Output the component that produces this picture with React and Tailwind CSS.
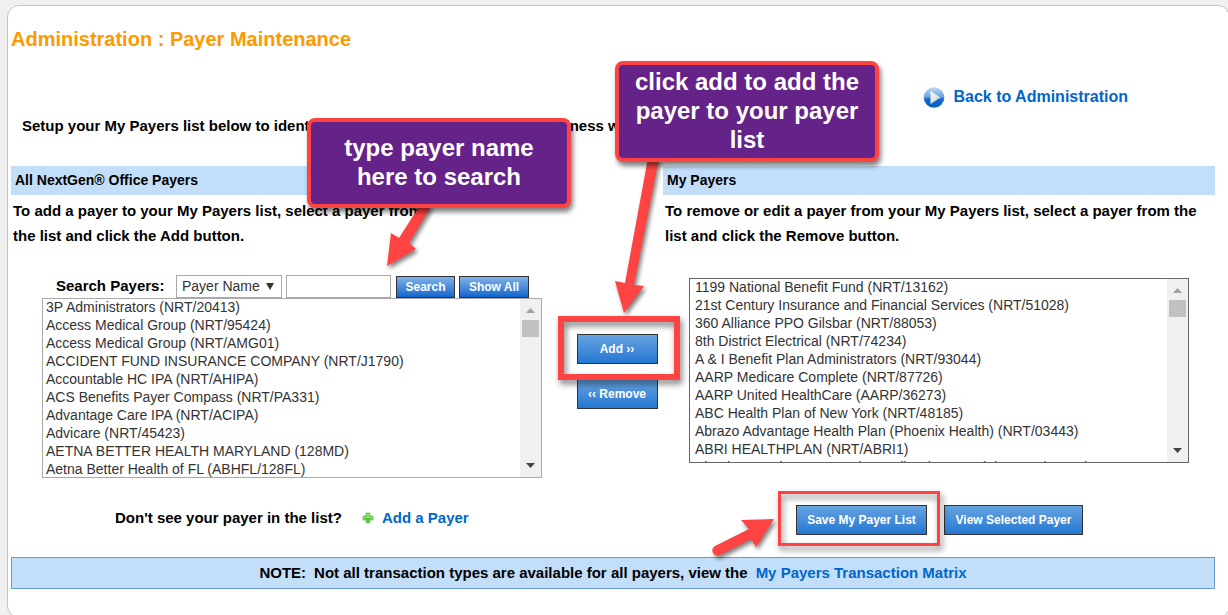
import React, { useState } from "react";
import clsx from "clsx";

const ALL_PAYERS = [
  "3P Administrators (NRT/20413)",
  "Access Medical Group (NRT/95424)",
  "Access Medical Group (NRT/AMG01)",
  "ACCIDENT FUND INSURANCE COMPANY (NRT/J1790)",
  "Accountable HC IPA (NRT/AHIPA)",
  "ACS Benefits Payer Compass (NRT/PA331)",
  "Advantage Care IPA (NRT/ACIPA)",
  "Advicare (NRT/45423)",
  "AETNA BETTER HEALTH MARYLAND (128MD)",
  "Aetna Better Health of FL (ABHFL/128FL)",
];

const MY_PAYERS = [
  "1199 National Benefit Fund (NRT/13162)",
  "21st Century Insurance and Financial Services (NRT/51028)",
  "360 Alliance PPO Gilsbar (NRT/88053)",
  "8th District Electrical (NRT/74234)",
  "A & I Benefit Plan Administrators (NRT/93044)",
  "AARP Medicare Complete (NRT/87726)",
  "AARP United HealthCare (AARP/36273)",
  "ABC Health Plan of New York (NRT/48185)",
  "Abrazo Advantage Health Plan (Phoenix Health) (NRT/03443)",
  "ABRI HEALTHPLAN (NRT/ABRI1)",
  "Absolute Total Care - South Carolina (Centene) (CTCTL/68069)",
];

const Button = ({ small, className, children }) => (
  <button
    type="button"
    className={clsx(
      "border border-[#333] text-xs font-bold text-white whitespace-nowrap",
      small
        ? "h-[22px] bg-linear-to-b from-[#7fb2e8] to-[#0a66cc]"
        : "h-[30px] bg-linear-to-b from-[#66a3e0] to-[#2277d2]",
      className
    )}
  >
    {children}
  </button>
);

const SectionTitle = ({ children }) => (
  <h2 className="flex h-[29px] items-center bg-[#c3def9] px-1 pb-0.5 text-sm font-bold">
    {children}
  </h2>
);

const ScrollBar = () => (
  <div
    aria-hidden="true"
    className="flex w-[21px] flex-col items-center justify-between bg-[#f0f0f0] py-[9px]"
  >
    <div className="flex flex-col items-center gap-[7px]">
      <svg width="9" height="5" viewBox="0 0 9 5" fill="#a0a0a0">
        <path d="M0 5 4.500 0 9 5z" />
      </svg>
      <div className="h-[17px] w-[17px] bg-[#c1c1c1]" />
    </div>
    <svg width="9" height="5" viewBox="0 0 9 5" fill="#444">
      <path d="M0 0h9L4.500 5z" />
    </svg>
  </div>
);

const PayerList = ({ label, payers, className, listClassName }) => (
  <div className={clsx("flex w-[500px] border bg-white", className)}>
    <select
      aria-label={label}
      size={10}
      className={clsx(
        "min-w-0 flex-1 overflow-hidden bg-transparent text-sm text-[#333] outline-none",
        listClassName
      )}
    >
      {payers.map((payer) => (
        <option key={payer} className="h-[18px] min-h-0 px-[3px] py-0 leading-[18px]">
          {payer}
        </option>
      ))}
    </select>
    <ScrollBar />
  </div>
);

const Callout = ({ className, children }) => (
  <div
    className={clsx(
      "absolute flex w-[264px] items-center justify-center rounded-lg border-4 border-[#ff4343] bg-[#652288] px-3 pb-0.5 text-center text-2xl leading-[29px] font-bold text-white shadow-[2px_4px_5px_rgba(0,0,0,0.5)]",
      className
    )}
  >
    {children}
  </div>
);

const Arrow = ({ className, width, height, children }) => (
  <svg
    width={width}
    height={height}
    viewBox={`0 0 ${width} ${height}`}
    fill="#ff4343"
    className={clsx(
      "absolute overflow-visible drop-shadow-[2px_3px_2px_rgba(0,0,0,0.5)]",
      className
    )}
  >
    {children}
  </svg>
);

const PlayIcon = () => (
  <svg width="22" height="22" viewBox="0 0 22 22">
    <defs>
      <linearGradient id="disc" x1="0" y1="0" x2="0" y2="1">
        <stop offset="0" stopColor="#c4dbf3" />
        <stop offset="0.45" stopColor="#6aa5e2" />
        <stop offset="0.6" stopColor="#0f69cb" />
        <stop offset="1" stopColor="#0a5cc0" />
      </linearGradient>
      <linearGradient id="triangle" x1="0" y1="0" x2="1" y2="1">
        <stop offset="0" stopColor="#fff" />
        <stop offset="1" stopColor="#c8c8c8" />
      </linearGradient>
    </defs>
    <circle cx="11" cy="11.500" r="10.300" fill="url(#disc)" />
    <path d="M7.500 5v13L17.500 11.500z" fill="url(#triangle)" />
  </svg>
);

const PlusIcon = () => (
  <svg width="12" height="12" viewBox="0 0 12 12">
    <path
      d="M4 1h4v3h3v4H8v3H4V8H1V4h3z"
      fill="#5cc43c"
      stroke="#8cc97a"
      strokeLinejoin="round"
    />
    <path d="M5 2h2v3h3v1H2V5h3z" fill="#93df74" />
  </svg>
);

export default function App() {
  const [searchBy, setSearchBy] = useState("Payer Name");
  const [query, setQuery] = useState("");

  return (
    <div className="h-screen overflow-hidden bg-[#f0f0f0] pt-[5px] pl-[7px] font-['Liberation_Sans',Arial,sans-serif] text-black">
      <main className="relative -mr-0.5 rounded-xl border border-[#c4c4c4] bg-white pt-5 pr-3.5 pb-7 pl-[3px] text-[15px] font-bold">
        <h1 className="text-xl leading-[26px] text-[#ff9900]">
          Administration : Payer Maintenance
        </h1>

        <div className="mt-[34px] flex justify-end pr-[87px]">
          <a href="#" className="flex items-center gap-2 text-base leading-[22px] text-[#0066cc]">
            <PlayIcon />
            Back to Administration
          </a>
        </div>
        <p className="mt-2 pl-[11px] leading-5 whitespace-nowrap">
          Setup your My Payers list below to identify any payers your center does business with.
        </p>

        <div className="mt-[30px] grid grid-cols-[560fr_92px_552fr]">
          <section>
            <SectionTitle>All NextGen® Office Payers</SectionTitle>
            <p className="mt-[3px] ml-0.5 w-[420px] leading-[25px]">
              To add a payer to your My Payers list, select a payer from the list and
              click the Add button.
            </p>
            <div className="mt-[27px] ml-[45px] flex h-[23px] items-center">
              <label htmlFor="search-by" className="w-[120px]">
                Search Payers:
              </label>
              <div className="relative mr-1">
                <select
                  id="search-by"
                  value={searchBy}
                  onChange={(e) => setSearchBy(e.target.value)}
                  className="h-[23px] w-[106px] appearance-none border border-[#a9a9a9] bg-white pb-px pl-[5px] text-sm font-normal text-[#333]"
                >
                  <option>Payer Name</option>
                  <option>Payer ID</option>
                </select>
                <svg
                  width="8"
                  height="7"
                  viewBox="0 0 8 7"
                  fill="#333"
                  className="pointer-events-none absolute top-2 right-2"
                >
                  <path d="M0 0h8L4 7z" />
                </svg>
              </div>
              <input
                type="text"
                aria-label="Search text"
                value={query}
                onChange={(e) => setQuery(e.target.value)}
                className="mr-[5px] h-[23px] w-[105px] border border-[#a9a9a9] px-1 text-sm font-normal"
              />
              <Button small className="mr-1 w-[59px]">
                Search
              </Button>
              <Button small className="w-[70px]">
                Show All
              </Button>
            </div>
            <PayerList
              label="All payers"
              payers={ALL_PAYERS}
              className="ml-[31px] h-[180px] border-[#a9a9a9] font-normal"
            />
            <p className="mt-[30px] ml-[104px] flex items-center leading-5">
              Don't see your payer in the list?
              <a href="#" className="ml-5 flex items-center gap-2 text-[#0066cc]">
                <PlusIcon />
                Add a Payer
              </a>
            </p>
          </section>

          <div className="flex flex-col items-center gap-[15px] pt-[168px]">
            <div className="relative flex">
              <Button className="w-[81px]">Add ››</Button>
              <div className="pointer-events-none absolute -top-[18px] -right-[22px] -bottom-4 -left-[19px] z-10 border-[6px] border-[#ff4343] drop-shadow-[2px_4px_3px_rgba(0,0,0,0.5)]" />
            </div>
            <Button className="w-[81px]">‹‹ Remove</Button>
          </div>

          <section>
            <SectionTitle>My Payers</SectionTitle>
            <p className="mt-[3px] ml-0.5 leading-[25px]">
              To remove or edit a payer from your My Payers list, select a payer from the
              list and click the Remove button.
            </p>
            <PayerList
              label="My payers"
              payers={MY_PAYERS}
              className="mt-[30px] ml-[26px] h-[185px] border-[#666] font-normal"
              listClassName="pl-0.5"
            />
            <div className="mt-[42px] ml-[133px] flex gap-[17px]">
              <div className="relative flex">
                <Button className="w-[131px]">Save My Payer List</Button>
                <div className="pointer-events-none absolute -top-[14px] -right-[13px] -bottom-[11px] -left-[18px] border-3 border-[#ff4343] drop-shadow-[2px_4px_3px_rgba(0,0,0,0.5)]" />
              </div>
              <Button className="w-[139px]">View Selected Payer</Button>
            </div>
          </section>
        </div>

        <p className="mt-[22px] flex h-8 items-center justify-center gap-2 border border-[#6699cc] bg-[#c3def9]">
          <span>NOTE:</span>
          <span>Not all transaction types are available for all payers, view the</span>
          <a href="#" className="text-[#0066cc]">
            My Payers Transaction Matrix
          </a>
        </p>

        {/* walkthrough notes */}
        <Arrow width={29} height={61} className="top-[199px] left-[379px]">
          <path d="M33 0H45L22 38L29 44L0 61L4 28L12 33z" />
        </Arrow>
        <Arrow width={43} height={155} className="top-[152px] left-[607px]">
          <path d="M33 0H44L19 127L29 128L9 155L0 123L10 125z" />
        </Arrow>
        <Arrow width={62} height={37} className="top-[513px] left-[704px]">
          <path d="M37 10L29 1L62 0L44 28L39 20L8 36A5 5 0 0 1 3 27z" />
        </Arrow>
        <Callout className="top-[112px] left-[299px] h-[90px]">
          type payer name here to search
        </Callout>
        <Callout className="top-[55px] left-[607px] h-[101px]">
          click add to add the payer to your payer list
        </Callout>
      </main>
    </div>
  );
}
